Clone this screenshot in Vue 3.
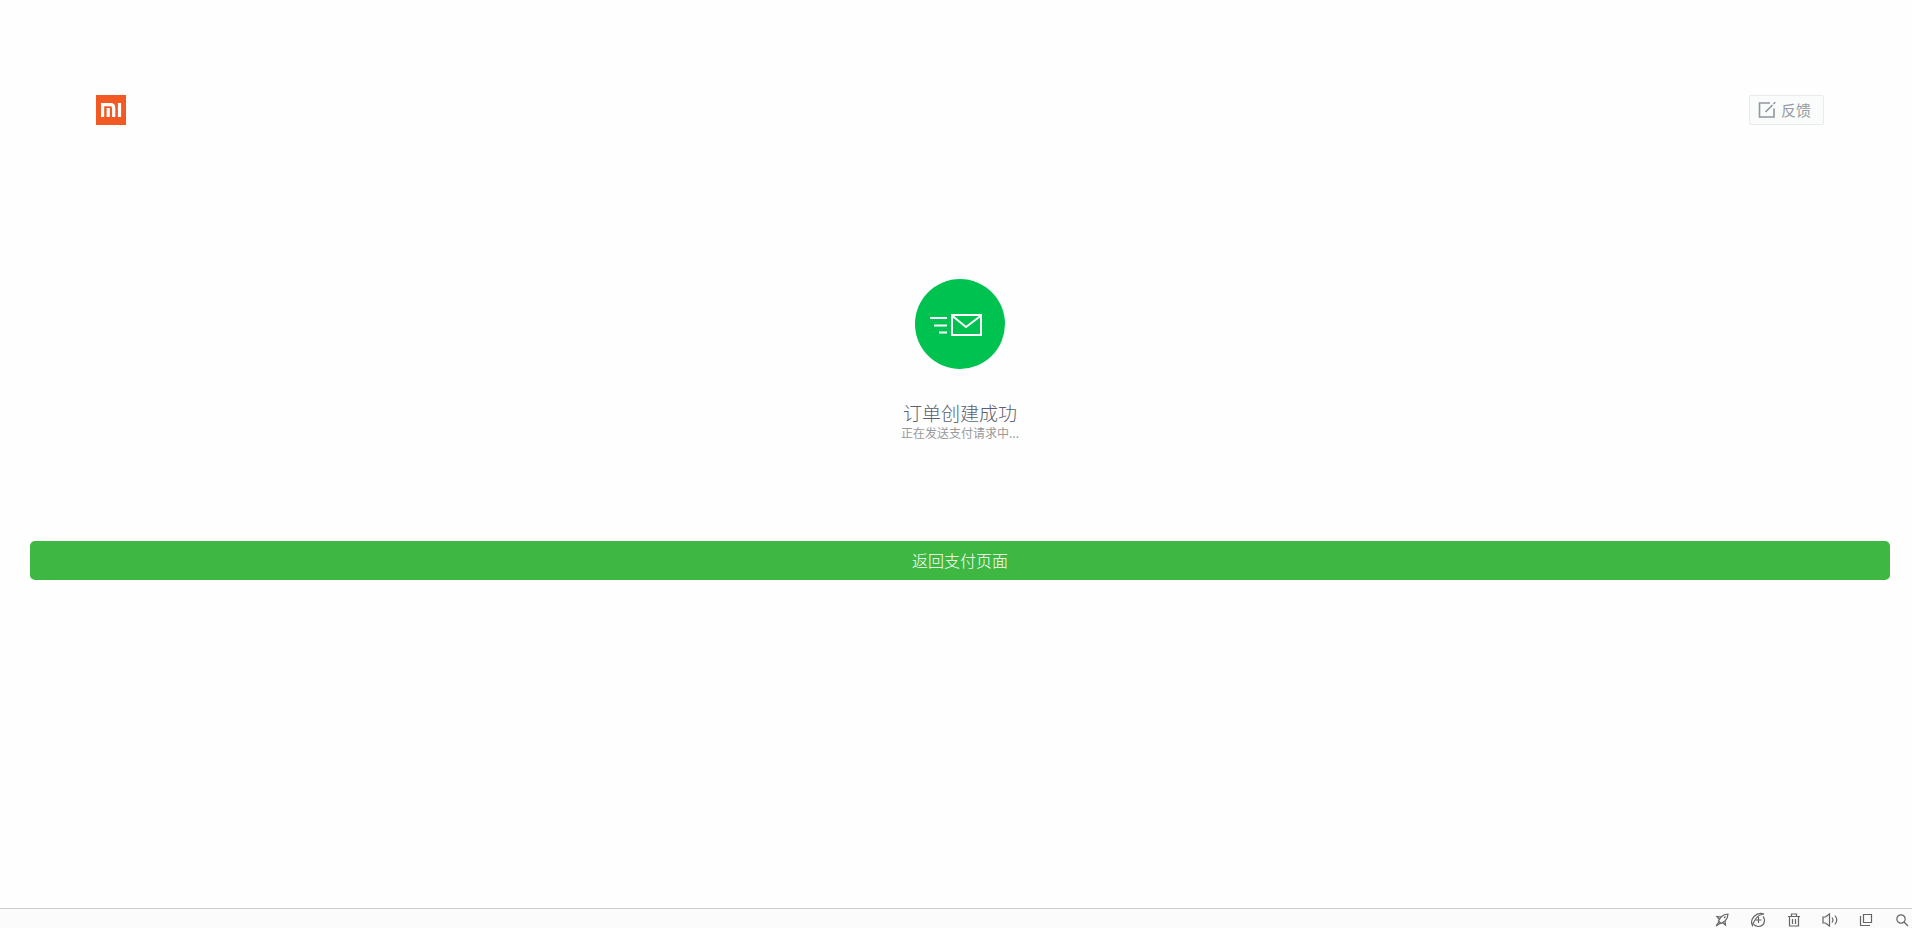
<script setup>
const emit = defineEmits(['feedback', 'back'])
</script>

<template>
  <div class="page">
    <header class="header">
      <a class="logo" href="#" aria-label="小米">
        <svg width="30" height="30" viewBox="0 0 30 30">
          <rect width="30" height="30" fill="#f25a24" />
          <g fill="none" stroke="#fff" stroke-width="3.2">
            <path d="M6.6 22V9.6H14.5Q17.7 9.6 17.7 12.8V22" />
            <path d="M12.2 13V22" />
            <path d="M23.5 8V22" />
          </g>
        </svg>
      </a>
      <button class="feedback" type="button" @click="emit('feedback')">
        <svg width="18" height="18" viewBox="0 0 18 18" fill="none" stroke="#8f979f" stroke-width="1.6">
          <path d="M12 2H1.5V16H16V7.5" />
          <path d="M7.5 11L14.5 4M15.5 3L17.3 1.2" />
        </svg>
        <span>反馈</span>
      </button>
    </header>

    <main class="result">
      <svg class="result-icon" width="90" height="90" viewBox="0 0 90 90">
        <circle cx="45" cy="45" r="45" fill="#00c250" />
        <g fill="none" stroke="#fff" stroke-width="2">
          <path d="M15 39H32M19 46.5H32M24 53.5H32" />
          <rect x="37" y="36" width="29" height="20" />
          <path d="M37.5 37L51 48L65.5 37" />
        </g>
      </svg>
      <h1 class="result-title">订单创建成功</h1>
      <p class="result-desc">正在发送支付请求中...</p>
    </main>

    <button class="back" type="button" @click="emit('back')">返回支付页面</button>
  </div>

  <footer class="toolbar">
    <button class="tool" type="button" aria-label="加速">
      <svg width="16" height="16" viewBox="0 0 16 16">
        <path d="M14 2Q10 2 7 5L4.5 9L7 11.5L11 9Q14 6 14 2Z" />
        <path d="M7 5L3 4.5L5.5 7.5M11 9L11.5 13L8.5 10.5M5 9.5L2 14L6.5 11" />
        <path d="M10 6L11.5 4.5" />
      </svg>
    </button>
    <button class="tool" type="button" aria-label="浏览模式">
      <svg width="16" height="16" viewBox="0 0 16 16">
        <path d="M13 4.5A6 6 0 1 1 4 12.5" />
        <path d="M2.5 13.5Q0 9 4 4.5Q8.5 0 14 2Q9 2.5 6 6.5Q3.5 10 2.5 13.5Z" />
        <path d="M5.5 8H11.5M8.5 5V11" />
      </svg>
    </button>
    <button class="tool" type="button" aria-label="清理">
      <svg width="16" height="16" viewBox="0 0 16 16">
        <path d="M2 4.5H14M5.5 4V2H10.5V4M3.5 4.5V14H12.5V4.5M6.5 7V12M9.5 7V12" />
      </svg>
    </button>
    <button class="tool" type="button" aria-label="声音">
      <svg width="16" height="16" viewBox="0 0 16 16">
        <path d="M1 5H3.5L7.5 2V14L3.5 11H1ZM10 5.5Q11.8 8 10 10.5M13 3.5Q16.5 8 13 12.5" />
      </svg>
    </button>
    <button class="tool" type="button" aria-label="窗口">
      <svg width="16" height="16" viewBox="0 0 16 16">
        <path d="M5.5 2.5H13.5V10.5H5.5ZM2.5 4V13.5H12" />
      </svg>
    </button>
    <button class="tool" type="button" aria-label="缩放">
      <svg width="16" height="16" viewBox="0 0 16 16">
        <circle cx="7" cy="7" r="4.2" />
        <path d="M10 10L14 14" />
      </svg>
    </button>
  </footer>
</template>

<style>
body {
  overflow-x: hidden;
  background: #fefefe;
}
</style>

<style scoped>
.page,
.toolbar {
  font-family: "Noto Sans CJK SC", sans-serif;
}

/* the content runs under the 8px scrollbar strip */
.page {
  display: flex;
  flex-direction: column;
  margin-right: -8px;
}

.header {
  display: flex;
  justify-content: space-between;
  padding: 95px 5% 0;
}

.logo,
.logo svg {
  display: block;
}

.feedback {
  display: flex;
  align-items: center;
  gap: 5px;
  box-sizing: border-box;
  width: 75px;
  height: 30px;
  padding: 0 0 0 8px;
  border: 1px solid #e8eaec;
  border-radius: 2px;
  background: #fafbfb;
  color: #959ca3;
  font: inherit;
  font-size: 15px;
  line-height: 20px;
  cursor: pointer;
}

.result {
  display: flex;
  flex-direction: column;
  align-items: center;
  margin-top: 154px;
}

.result-title {
  margin: 33px 0 0;
  color: #5c6070;
  font-size: 19px;
  font-weight: 300;
  line-height: 22px;
}

.result-desc {
  margin: 0;
  color: #999;
  font-size: 12px;
  line-height: 18px;
}

.back {
  height: 39px;
  margin: 99px 30px 0;
  padding: 0 0 2px;
  border: none;
  border-radius: 5px;
  background: #3eb743;
  color: #fff;
  font: inherit;
  font-size: 16px;
  font-weight: 300;
  cursor: pointer;
}

.toolbar {
  position: fixed;
  right: 0;
  bottom: 0;
  left: 0;
  display: flex;
  justify-content: flex-end;
  gap: 20px;
  box-sizing: border-box;
  height: 20px;
  padding: 3px 2px 0 0;
  border-top: 1px solid #ccc;
  background: #fbfbfb;
}

.tool {
  width: 16px;
  height: 16px;
  padding: 0;
  border: none;
  background: none;
  cursor: pointer;
}

.tool svg {
  display: block;
  fill: none;
  stroke: #666;
  stroke-width: 1.2;
}
</style>
